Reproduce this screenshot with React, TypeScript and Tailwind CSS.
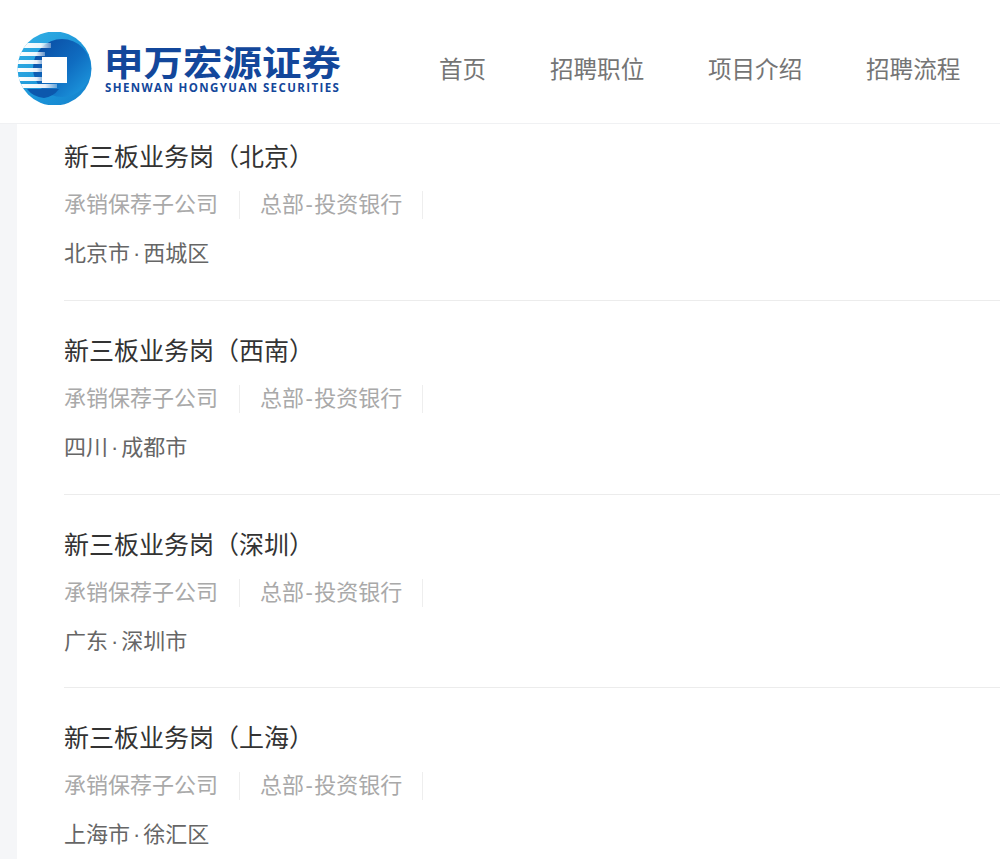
const font = "font-['Liberation_Sans','Noto_Sans_CJK_SC',sans-serif]";

const jobs = [
  { title: "新三板业务岗（北京）", region: "北京市", district: "西城区" },
  { title: "新三板业务岗（西南）", region: "四川", district: "成都市" },
  { title: "新三板业务岗（深圳）", region: "广东", district: "深圳市" },
  { title: "新三板业务岗（上海）", region: "上海市", district: "徐汇区" },
];

const navItems = ["首页", "招聘职位", "项目介绍", "招聘流程"];

function LogoMark() {
  return (
    <svg width="75" height="73" viewBox="0 0 75 73" className="shrink-0">
      <defs>
        <linearGradient id="ring" x1="0" y1="0" x2="1" y2="1">
          <stop offset="0" stopColor="#35b3e6" />
          <stop offset="0.6" stopColor="#1a93d8" />
          <stop offset="1" stopColor="#1580cc" />
        </linearGradient>
        <linearGradient id="inner" x1="0.1" y1="0.1" x2="0.9" y2="0.9">
          <stop offset="0" stopColor="#0a4ea5" />
          <stop offset="0.55" stopColor="#0f6cc0" />
          <stop offset="1" stopColor="#1c95dc" />
        </linearGradient>
        <linearGradient id="band" x1="0" y1="0" x2="1" y2="0">
          <stop offset="0" stopColor="#ffffff" />
          <stop offset="0.7" stopColor="#ffffff" stopOpacity="0.9" />
          <stop offset="1" stopColor="#ffffff" stopOpacity="0.35" />
        </linearGradient>
        <clipPath id="disc">
          <circle cx="37.5" cy="36.5" r="37" />
        </clipPath>
      </defs>
      <circle cx="37.5" cy="36.5" r="37" fill="url(#ring)" />
      <circle cx="45" cy="36" r="29" fill="url(#inner)" />
      <path d="M10 57 H42 Q36 65 27 66 Q16 65 10 57 Z" fill="#0c58ad" />
      <g clipPath="url(#disc)" fill="url(#band)">
        <rect x="0" y="11" width="34" height="5" />
        <rect x="0" y="20" width="28" height="4" />
        <rect x="0" y="28" width="28" height="4" />
        <rect x="0" y="36" width="28" height="4" />
        <rect x="0" y="45" width="28" height="4" />
        <rect x="0" y="52" width="40" height="4" />
      </g>
      <rect x="25" y="25" width="25" height="26" fill="#ffffff" />
    </svg>
  );
}

export default function App() {
  return (
    <div className={`relative h-[859px] w-[1000px] overflow-hidden bg-white ${font}`}>
      <header className="flex h-[124px] items-center border-b border-[#f0f1f3] pt-[13px]">
        <div className="ml-[17px] flex items-center gap-[13px]">
          <LogoMark />
          <div className="flex w-[236px] flex-col pt-[5px]">
            <span className="-ml-[1px] h-[33px] origin-top scale-y-90 whitespace-nowrap text-[39.5px] font-bold leading-[36px] text-[#13479b]">
              申万宏源证券
            </span>
            <span className="mt-[1px] whitespace-nowrap font-['Open_Sans',sans-serif] text-[11.5px] font-bold leading-[14px] tracking-[1.4px] text-[#13479b]">
              SHENWAN HONGYUAN SECURITIES
            </span>
          </div>
        </div>
        <nav className="ml-[98px] flex gap-[63.7px] pt-[6px] text-[23.6px] text-[#757575]">
          {navItems.map((item) => (
            <span key={item} className="whitespace-nowrap">{item}</span>
          ))}
        </nav>
      </header>

      <div className="flex h-[735px]">
        <div className="w-[17px] shrink-0 bg-[#f5f6f8]" />
        <ul className="ml-[47px] flex-1">
          {jobs.map((job, i) => (
            <li
              key={job.title}
              className={`flex flex-col border-b border-[#ececec] ${i === 0 ? "h-[177px] pt-[16px]" : "h-[193.6px] pt-[33px]"}`}
            >
              <div className="h-[34px] whitespace-nowrap text-[25px] leading-[34px] text-[#333333] [text-spacing-trim:space-all]">
                {job.title}
              </div>
              <div className="mt-[17px] flex h-[28px] items-center text-[22px] leading-[28px] text-[#a9a9a9]">
                <span className="border-r border-[#eeeeee] pr-[21px]">承销保荐子公司</span>
                <span className="border-r border-[#eeeeee] pl-[20px] pr-[20px]">
                  总部<span className="mx-[1.4px]">-</span>投资银行
                </span>
              </div>
              <div className="mt-[20px] h-[30px] whitespace-nowrap text-[22px] leading-[30px] text-[#666666]">
                {job.region}<span className="mx-[3px]">·</span>{job.district}
              </div>
            </li>
          ))}
        </ul>
      </div>
    </div>
  );
}
